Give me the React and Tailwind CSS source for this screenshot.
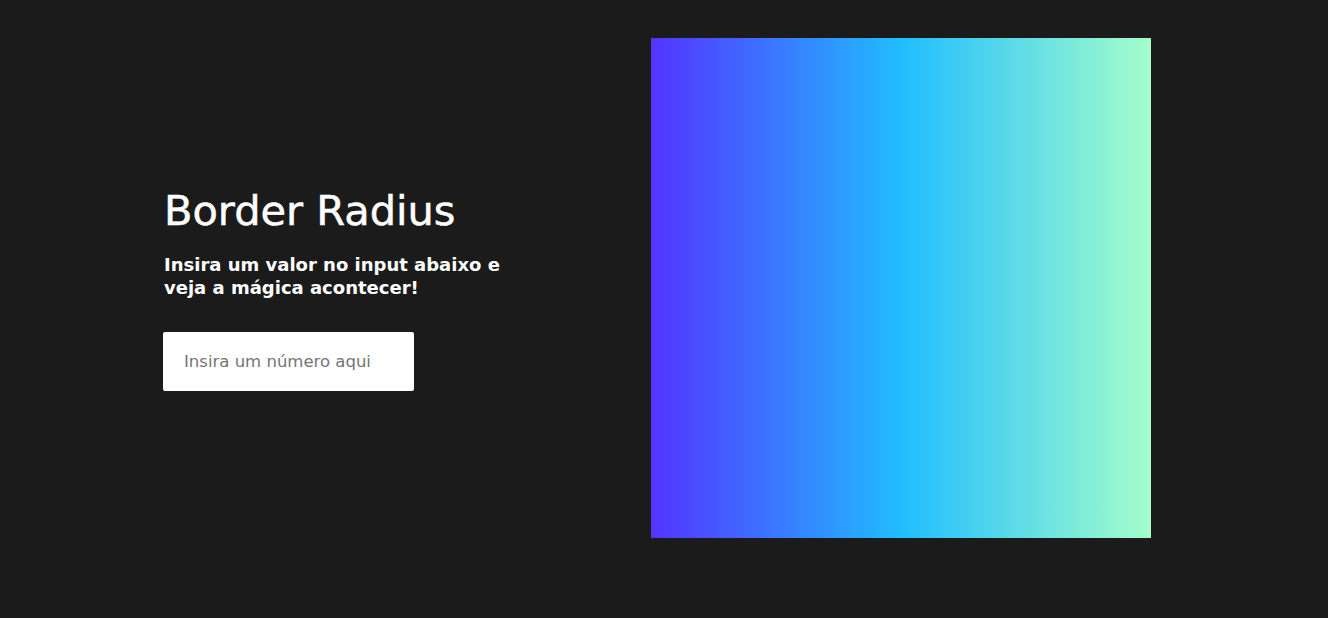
export default function App() {
  return (
    <div className="h-[618px] w-full bg-[#1b1b1b] flex items-start pt-[38px] pl-[163px]">
      <div className="w-[488px] h-[500px] shrink-0 flex flex-col justify-center pt-[2px]" style={{ fontFamily: '"DejaVu Sans", sans-serif' }}>
        <h1 className="text-[41.5px] leading-[48px] font-normal text-white [-webkit-text-stroke:0.5px_white] pl-[1px]">Border Radius</h1>
        <p className="mt-[18px] w-[350px] text-[18px] leading-[23px] font-bold text-white pl-[1px]">
          Insira um valor no input abaixo e veja a mágica acontecer!
        </p>
        <input
          type="text"
          placeholder="Insira um número aqui"
          className="mt-[33px] w-[251px] h-[59px] rounded-[2px] bg-white px-[21px] text-[16.5px] text-[#555] placeholder:text-[#757575] outline-none"
          style={{ fontFamily: '"DejaVu Sans", sans-serif' }}
        />
      </div>
      <div className="w-[500px] h-[500px] shrink-0 bg-[linear-gradient(to_right,#5433ff,#20bdff,#a5fecb)]" />
    </div>
  );
}
